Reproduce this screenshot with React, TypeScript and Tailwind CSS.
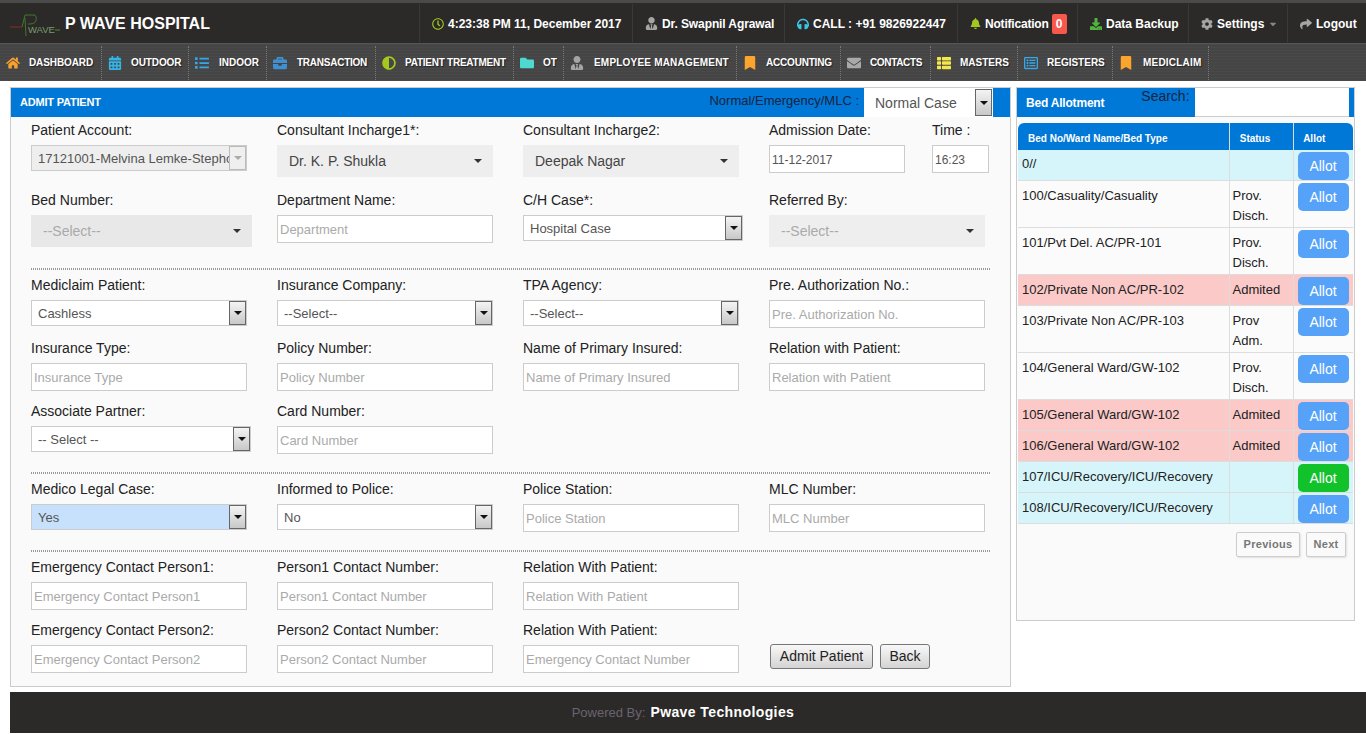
import React from "react";
import {
  FaHome,
  FaCalendarAlt,
  FaList,
  FaBriefcase,
  FaAdjust,
  FaFolder,
  FaUserTie,
  FaBookmark,
  FaEnvelope,
  FaThList,
  FaRegListAlt,
  FaRegClock,
  FaHeadphones,
  FaBell,
  FaDownload,
  FaCog,
  FaShare,
  FaCaretDown,
} from "react-icons/fa";

const navItems = [
  { label: "DASHBOARD", icon: FaHome, color: "text-[#f9a12e]", width: "w-[102px]", text: "ml-[9px] tracking-[-0.1px]" },
  { label: "OUTDOOR", icon: FaCalendarAlt, color: "text-[#35b4e6]", width: "w-[87px]", text: "ml-[9px] tracking-[-0.1px]" },
  { label: "INDOOR", icon: FaList, color: "text-[#35a8ec]", width: "w-[78px]", text: "ml-[10px]" },
  { label: "TRANSACTION", icon: FaBriefcase, color: "text-[#3f8fd2]", width: "w-[109px]", text: "ml-[10px] tracking-[-0.25px]" },
  { label: "PATIENT TREATMENT", icon: FaAdjust, color: "text-[#a4c81e]", width: "w-[138px]", text: "ml-[9px] tracking-[-0.25px]" },
  { label: "OT", icon: FaFolder, color: "text-[#4fd8d0]", width: "w-[50px]", text: "ml-[9px]" },
  { label: "EMPLOYEE MANAGEMENT", icon: FaUserTie, color: "text-[#a5a5a5]", width: "w-[173px]", text: "ml-[10px] tracking-[0.2px]" },
  { label: "ACCOUNTING", icon: FaBookmark, color: "text-[#fba52f]", width: "w-[104px]", text: "ml-[9px] tracking-[-0.2px]" },
  { label: "CONTACTS", icon: FaEnvelope, color: "text-[#a9a9a9]", width: "w-[90px]", text: "ml-[9px] tracking-[-0.35px]" },
  { label: "MASTERS", icon: FaThList, color: "text-[#f4e64c]", width: "w-[87px]", text: "ml-[9px]" },
  { label: "REGISTERS", icon: FaRegListAlt, color: "text-[#35a8ec]", width: "w-[95px]", text: "ml-[9px]" },
  { label: "MEDICLAIM", icon: FaBookmark, color: "text-[#fba52f]", width: "w-[96px]", text: "ml-[10px] tracking-[0.2px]" },
];

const beds = [
  { name: "0//", status: "", row: "bg-[#d6f5fa]", h: "h-[30px]", pad: "pt-[4px]" },
  { name: "100/Casuality/Casuality", status: "Prov. Disch.", row: "bg-[#fbfbfb]", h: "h-[47px]", pad: "pt-[5px]" },
  { name: "101/Pvt Del. AC/PR-101", status: "Prov. Disch.", row: "bg-[#fbfbfb]", h: "h-[47px]", pad: "pt-[5px]" },
  { name: "102/Private Non AC/PR-102", status: "Admited", row: "bg-[#fbc9c8]", h: "h-[31px]", pad: "pt-[5px]" },
  { name: "103/Private Non AC/PR-103", status: "Prov Adm.", row: "bg-[#fbfbfb]", h: "h-[47px]", pad: "pt-[5px]" },
  { name: "104/General Ward/GW-102", status: "Prov. Disch.", row: "bg-[#fbfbfb]", h: "h-[47px]", pad: "pt-[5px]" },
  { name: "105/General Ward/GW-102", status: "Admited", row: "bg-[#fbc9c8]", h: "h-[31px]", pad: "pt-[5px]" },
  { name: "106/General Ward/GW-102", status: "Admited", row: "bg-[#fbc9c8]", h: "h-[31px]", pad: "pt-[5px]" },
  { name: "107/ICU/Recovery/ICU/Recovery", status: "", row: "bg-[#d6f5fa]", h: "h-[31px]", pad: "pt-[5px]", active: true },
  { name: "108/ICU/Recovery/ICU/Recovery", status: "", row: "bg-[#d6f5fa]", h: "h-[31px]", pad: "pt-[5px]" },
];

const Label = ({ children }: { children: React.ReactNode }) => (
  <div className="h-[16px] text-[14px] leading-[16px] text-[#222] whitespace-nowrap">{children}</div>
);

const Arrow = ({ disabled, h = "h-[24px]" }: { disabled?: boolean; h?: string }) => (
  <div
    className={`flex ${h} w-[17px] shrink-0 items-center justify-center border bg-gradient-to-b ${
      disabled ? "border-[#bbb] from-[#f0f0f0] to-[#eee]" : "border-[#666] from-[#f4f4f4] to-[#c8c8c8]"
    }`}
  >
    <div
      className={`h-0 w-0 border-x-[4px] border-t-[4px] border-x-transparent ${
        disabled ? "border-t-[#aaa]" : "border-t-[#111]"
      }`}
    />
  </div>
);

const Select = ({
  value,
  w = "w-[216px]",
  bg = "bg-white",
  disabled,
}: {
  value: string;
  w?: string;
  bg?: string;
  disabled?: boolean;
}) => (
  <div className={`mt-[7px] flex h-[26px] ${w} items-center border border-[#ccc] ${bg}`}>
    <div className="min-w-0 flex-1 overflow-hidden whitespace-nowrap pl-[6px] pt-[2px] text-[13px] text-[#555]">{value}</div>
    <Arrow disabled={disabled} />
  </div>
);

const Chosen = ({
  value,
  w = "w-[216px]",
  muted,
  bg = "bg-[#eee]",
}: {
  value: string;
  w?: string;
  muted?: boolean;
  bg?: string;
}) => (
  <div className={`mt-[7px] flex h-[32px] ${w} items-center justify-between pl-[12px] pr-[11px] ${bg}`}>
    <span className={`text-[14px] ${muted ? "text-[#aaa]" : "text-[#444]"}`}>{value}</span>
    <div className="h-0 w-0 border-x-[4px] border-t-[4px] border-x-transparent border-t-[#333]" />
  </div>
);

const Input = ({
  placeholder,
  value,
  w = "w-[216px]",
}: {
  placeholder?: string;
  value?: string;
  w?: string;
}) => (
  <input
    readOnly
    placeholder={placeholder}
    value={value}
    className={`mt-[7px] block h-[28px] ${w} border border-[#ccc] bg-white px-[2px] pt-[2px] text-[12px] text-[#555] outline-none placeholder:text-[13px] placeholder:text-[#aaa]`}
  />
);

const Row = ({ children, h }: { children: React.ReactNode; h: string }) => (
  <div className={`grid ${h} grid-cols-[246px_246px_246px_1fr] pl-[20px]`}>{children}</div>
);

const Rule = ({ h }: { h: string }) => (
  <div className={`${h} mx-[20px]`}>
    <div className="h-[2px] bg-[repeating-linear-gradient(90deg,#999_0,#999_1px,transparent_1px,transparent_2px)]" />
  </div>
);

const Logo = () => (
  <svg width="52" height="36" viewBox="0 0 52 36" className="shrink-0">
    <path d="M0 21H12" stroke="#8a2a20" strokeWidth="1" fill="none" />
    <path d="M12 21L15 9H24C27 9 27 16 24 17C22 18 20 18 18 18" stroke="#4a8a2a" strokeWidth="0.8" fill="none" />
    <path d="M15 12L16 30" stroke="#4a8a2a" strokeWidth="0.8" fill="none" />
    <text x="18" y="27" fontSize="9.5" fill="#7d9a6a" fontFamily="Liberation Sans, sans-serif">
      WAVE
    </text>
    <path d="M45 24H50" stroke="#4a8a2a" strokeWidth="1" fill="none" />
  </svg>
);

const TopItem = ({ w, children }: { w: string; children: React.ReactNode }) => (
  <div
    className={`flex h-[38px] ${w} items-center gap-[4px] border-l border-[#3a3938] pl-[12px] pt-[1px] text-[12px] font-bold text-white whitespace-nowrap`}
  >
    {children}
  </div>
);

const App = () => {
  return (
    <div className="min-h-[734px] bg-white font-['Liberation_Sans',Arial,sans-serif]">
      <div className="h-[3px] bg-[#4a4a4a]" />
      {/* Top bar */}
      <div className="flex h-[40px] items-center justify-between bg-[#2b2a29]">
        <div className="flex items-center pl-[10px] pt-[1px]">
          <Logo />
          <span className="ml-[3px] text-[16px] font-bold text-white">P WAVE HOSPITAL</span>
        </div>
        <div className="flex items-center">
          <TopItem w="w-[213px]">
            <FaRegClock className="text-[12px] text-[#a4c81e]" />
            <span>4:23:38 PM 11, December 2017</span>
          </TopItem>
          <TopItem w="w-[152px]">
            <FaUserTie className="text-[13px] text-[#a5a5a5]" />
            <span className="tracking-[-0.1px]">Dr. Swapnil Agrawal</span>
          </TopItem>
          <TopItem w="w-[173px]">
            <FaHeadphones className="text-[12px] text-[#3cc3e8]" />
            <span>CALL : +91 9826922447</span>
          </TopItem>
          <TopItem w="w-[120px]">
            <FaBell className="text-[11px] text-[#a4c81e]" />
            <span className="tracking-[-0.2px]">Notification</span>
            <span className="-ml-[1px] flex h-[20px] w-[15px] items-center justify-center rounded-[2px] bg-[#f9574b] text-[12px]">
              0
            </span>
          </TopItem>
          <TopItem w="w-[111px]">
            <FaDownload className="text-[12px] text-[#4fb83c]" />
            <span>Data Backup</span>
          </TopItem>
          <TopItem w="w-[99px]">
            <FaCog className="text-[12px] text-[#a5a5a5]" />
            <span>Settings</span>
            <FaCaretDown className="text-[10px] text-[#888]" />
          </TopItem>
          <TopItem w="w-[79px]">
            <FaShare className="text-[12px] text-[#a5a5a5]" />
            <span>Logout</span>
          </TopItem>
        </div>
      </div>

      {/* Main menu */}
      <div className="flex h-[38px] items-center border-t border-[#555] bg-[#454545] bg-[repeating-linear-gradient(0deg,rgba(255,255,255,0.025)_0,rgba(255,255,255,0.025)_1px,transparent_1px,transparent_3px)]">
        {navItems.map((item) => (
          <div
            key={item.label}
            className={`flex h-[34px] ${item.width} items-center border-r border-dotted border-[#777] pl-[6px] shrink-0`}
          >
            <item.icon className={`w-[14px] shrink-0 text-[14px] ${item.color}`} />
            <span className={`${item.text} whitespace-nowrap text-[10px] font-bold text-white [text-shadow:1px_1px_1px_rgba(0,0,0,0.5)]`}>
              {item.label}
            </span>
          </div>
        ))}
      </div>

      <div className="flex gap-[5px] pl-[10px] pt-[6px]">
        {/* Admit patient form */}
        <div className="h-[600px] w-[1001px] border border-[#ccc] bg-[#fafafa]">
          <div className="flex h-[29px] items-center justify-between bg-[#0078d7] pl-[9px] pr-[17px]">
            <span className="text-[11px] font-bold tracking-[-0.2px] text-white">ADMIT PATIENT</span>
            <div className="flex items-start">
              <span className="mr-[5px] mt-[3px] text-[13px] leading-[20px] text-[#1a2340]">Normal/Emergency/MLC :</span>
              <div className="flex h-[29px] w-[129px] items-center justify-between bg-white pl-[11px] pr-[1px]">
                <span className="pt-[2px] text-[14px] text-[#555]">Normal Case</span>
                <Arrow h="h-[27px]" />
              </div>
            </div>
          </div>
          <div className="pt-[5px]">
            <Row h="h-[70px]">
              <div>
                <Label>Patient Account:</Label>
                <Select value="17121001-Melvina Lemke-Stephon" bg="bg-[#eee]" disabled />
              </div>
              <div>
                <Label>Consultant Incharge1*:</Label>
                <Chosen value="Dr. K. P. Shukla" />
              </div>
              <div>
                <Label>Consultant Incharge2:</Label>
                <Chosen value="Deepak Nagar" />
              </div>
              <div className="flex">
                <div className="w-[163px]">
                  <Label>Admission Date:</Label>
                  <Input value="11-12-2017" w="w-[136px]" />
                </div>
                <div>
                  <Label>Time :</Label>
                  <Input value="16:23" w="w-[57px]" />
                </div>
              </div>
            </Row>
            <Row h="h-[76px]">
              <div>
                <Label>Bed Number:</Label>
                <Chosen value="--Select--" w="w-[221px]" muted bg="bg-[#e8e8e8]" />
              </div>
              <div>
                <Label>Department Name:</Label>
                <Input placeholder="Department" />
              </div>
              <div>
                <Label>C/H Case*:</Label>
                <Select value="Hospital Case" w="w-[220px]" />
              </div>
              <div>
                <Label>Referred By:</Label>
                <Chosen value="--Select--" muted />
              </div>
            </Row>
            <Rule h="h-[9px]" />
            <Row h="h-[63px]">
              <div>
                <Label>Mediclaim Patient:</Label>
                <Select value="Cashless" />
              </div>
              <div>
                <Label>Insurance Company:</Label>
                <Select value="--Select--" />
              </div>
              <div>
                <Label>TPA Agency:</Label>
                <Select value="--Select--" />
              </div>
              <div>
                <Label>Pre. Authorization No.:</Label>
                <Input placeholder="Pre. Authorization No." />
              </div>
            </Row>
            <Row h="h-[63px]">
              <div>
                <Label>Insurance Type:</Label>
                <Input placeholder="Insurance Type" />
              </div>
              <div>
                <Label>Policy Number:</Label>
                <Input placeholder="Policy Number" />
              </div>
              <div>
                <Label>Name of Primary Insured:</Label>
                <Input placeholder="Name of Primary Insured" />
              </div>
              <div>
                <Label>Relation with Patient:</Label>
                <Input placeholder="Relation with Patient" />
              </div>
            </Row>
            <Row h="h-[69px]">
              <div>
                <Label>Associate Partner:</Label>
                <Select value="-- Select --" w="w-[220px]" />
              </div>
              <div>
                <Label>Card Number:</Label>
                <Input placeholder="Card Number" />
              </div>
            </Row>
            <Rule h="h-[9px]" />
            <Row h="h-[69px]">
              <div>
                <Label>Medico Legal Case:</Label>
                <Select value="Yes" bg="bg-[#c7e1fc]" />
              </div>
              <div>
                <Label>Informed to Police:</Label>
                <Select value="No" />
              </div>
              <div>
                <Label>Police Station:</Label>
                <Input placeholder="Police Station" />
              </div>
              <div>
                <Label>MLC Number:</Label>
                <Input placeholder="MLC Number" />
              </div>
            </Row>
            <Rule h="h-[9px]" />
            <Row h="h-[63px]">
              <div>
                <Label>Emergency Contact Person1:</Label>
                <Input placeholder="Emergency Contact Person1" />
              </div>
              <div>
                <Label>Person1 Contact Number:</Label>
                <Input placeholder="Person1 Contact Number" />
              </div>
              <div>
                <Label>Relation With Patient:</Label>
                <Input placeholder="Relation With Patient" />
              </div>
            </Row>
            <Row h="h-[60px]">
              <div>
                <Label>Emergency Contact Person2:</Label>
                <Input placeholder="Emergency Contact Person2" />
              </div>
              <div>
                <Label>Person2 Contact Number:</Label>
                <Input placeholder="Person2 Contact Number" />
              </div>
              <div>
                <Label>Relation With Patient:</Label>
                <Input placeholder="Emergency Contact Number" />
              </div>
              <div className="flex gap-[7px] pl-[1px] pt-[22px]">
                <button className="h-[25px] w-[103px] rounded-[3px] border border-[#777] bg-gradient-to-b from-[#f8f8f8] to-[#d4d4d4] text-[14px] text-[#222]">
                  Admit Patient
                </button>
                <button className="h-[25px] w-[50px] rounded-[3px] border border-[#777] bg-gradient-to-b from-[#f8f8f8] to-[#d4d4d4] text-[14px] text-[#222]">
                  Back
                </button>
              </div>
            </Row>
          </div>
        </div>

        {/* Bed allotment */}
        <div className="h-[534px] w-[339px] border border-[#ccc] bg-[#fafafa]">
          <div className="flex h-[29px] items-stretch bg-[#0078d7] pl-[9px] pr-[5px]">
            <span className="self-center whitespace-nowrap pt-[1px] text-[12px] font-bold tracking-[-0.2px] text-white">
              Bed Allotment
            </span>
            <span className="ml-[37px] whitespace-nowrap text-[14px] leading-[16px] text-[#1a2340]">Search:</span>
            <input
              readOnly
              className="ml-[5px] w-[154px] border-b border-[#ccc] bg-white outline-none"
            />
          </div>
          <div className="px-[1px] pt-[6px]">
            <table className="w-[335px] table-fixed border-collapse text-[13px] leading-[20px] text-[#222]">
              <thead>
                <tr className="h-[27px] bg-[#0078d7] text-[10px] font-bold text-white">
                  <th className="w-[211px] rounded-tl-[6px] border-r border-[#ddd] pl-[10px] pt-[5px] text-left font-bold">
                    Bed No/Ward Name/Bed Type
                  </th>
                  <th className="w-[64px] border-r border-[#ddd] pr-[12px] pt-[5px] font-bold">Status</th>
                  <th className="rounded-tr-[6px] pr-[18px] pt-[5px] font-bold">Allot</th>
                </tr>
              </thead>
              <tbody>
                {beds.map((bed) => (
                  <tr key={bed.name} className={`${bed.h} ${bed.row} border-b border-[#ddd]`}>
                    <td className={`border-r border-[#ddd] px-[4px] ${bed.pad} align-top`}>{bed.name}</td>
                    <td className={`border-r border-[#ddd] px-[3px] ${bed.pad} align-top`}>{bed.status}</td>
                    <td className="px-[4px] pt-[2px] align-top">
                      <button
                        className={`block h-[28px] w-[51px] rounded-[5px] text-[14px] text-white ${
                          bed.active ? "bg-[#12c22a]" : "bg-[#55a2f8]"
                        }`}
                      >
                        Allot
                      </button>
                    </td>
                  </tr>
                ))}
              </tbody>
            </table>
            <div className="flex justify-end gap-[6px] pr-[7px] pt-[8px]">
              <button className="h-[25px] w-[64px] rounded-[2px] border border-[#ccc] bg-[#fafafa] text-[11px] font-bold tracking-[0.3px] text-[#777] shadow-[1px_1px_2px_rgba(0,0,0,0.1)]">
                Previous
              </button>
              <button className="h-[25px] w-[40px] rounded-[2px] border border-[#ccc] bg-[#fafafa] text-[11px] font-bold tracking-[0.3px] text-[#777] shadow-[1px_1px_2px_rgba(0,0,0,0.1)]">
                Next
              </button>
            </div>
          </div>
        </div>
      </div>

      {/* Footer */}
      <div className="ml-[10px] mt-[5px] flex h-[41px] items-center justify-center bg-[#2b2a29] pr-[10px]">
        <span className="text-[13px] text-[#6b6370]">Powered By:</span>
        <span className="ml-[5px] text-[14px] font-bold tracking-[0.4px] text-white">Pwave Technologies</span>
      </div>
    </div>
  );
};

export default App;
